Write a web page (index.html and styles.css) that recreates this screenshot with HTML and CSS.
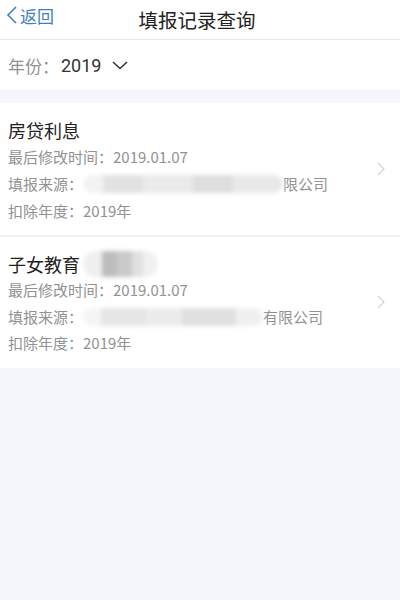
FILE: index.html
```html
<!DOCTYPE html>
<html lang="zh-CN">
  <head>
    <meta charset="UTF-8" />
    <meta name="viewport" content="width=device-width, initial-scale=1.0" />
    <title>填报记录查询</title>
    <link rel="stylesheet" href="styles.css">
  </head>
  <body>
    <header class="topbar">
      <a class="back">
        <svg width="14" height="20" viewBox="0 0 14 20"><path d="M11 2 L3 10 L11 18" fill="none" stroke="#3f7fc6" stroke-width="1.6"/></svg>
        返回
      </a>
      <h1>填报记录查询</h1>
    </header>

    <div class="year">
      <span class="label">年份：</span><span class="val">2019</span>
      <svg class="down" width="18" height="12" viewBox="0 0 18 12"><path d="M2 3 L9 9.5 L16 3" fill="none" stroke="#333" stroke-width="1.5"/></svg>
    </div>

    <section class="list">
      <article class="card">
        <h2>房贷利息</h2>
        <p>最后修改时间：2019.01.07</p>
        <p>填报来源：<span class="blur b1"></span>限公司</p>
        <p>扣除年度：2019年</p>
        <svg class="arrow" width="10" height="16" viewBox="0 0 10 16"><path d="M2 2 L8 8 L2 14" fill="none" stroke="#d2d2d2" stroke-width="1.2"/></svg>
      </article>
      <article class="card">
        <h2>子女教育<span class="blur b3"></span></h2>
        <p>最后修改时间：2019.01.07</p>
        <p>填报来源：<span class="blur b2"></span>有限公司</p>
        <p>扣除年度：2019年</p>
        <svg class="arrow" width="10" height="16" viewBox="0 0 10 16"><path d="M2 2 L8 8 L2 14" fill="none" stroke="#d2d2d2" stroke-width="1.2"/></svg>
      </article>
    </section>
  </body>
</html>
```

FILE: styles.css
```css
body {
  margin: 0;
  width: 400px;
  height: 600px;
  background: #f4f6fb;
  font-family: "Noto Sans CJK SC", "Noto Sans", sans-serif;
  overflow: hidden;
}

.topbar {
  height: 39px;
  background: white;
  border-bottom: 1px solid #e6e6e6;
  display: flex;
  align-items: center;
  justify-content: center;
  position: relative;
}

.topbar h1 {
  margin: 0;
  font-size: 19.5px;
  font-weight: normal;
  color: #222;
  margin-left: -6px;
}

.back {
  position: absolute;
  left: 5px;
  top: 0;
  height: 30px;
  display: flex;
  align-items: center;
  gap: 1px;
  color: #3f7fc6;
  font-size: 17px;
}

.year {
  height: 50px;
  background: white;
  display: flex;
  align-items: center;
  padding-left: 8px;
  font-size: 17px;
}

.year .label {
  color: #909090;
}

.year .val {
  color: #333;
  font-family: "Roboto", sans-serif;
  font-size: 18px;
  margin-left: 2px;
}

.year .down {
  margin-left: 10px;
}

.list {
  margin-top: 13px;
  display: flex;
  flex-direction: column;
  gap: 2px;
  background: #eef0f4;
}

.card {
  background: white;
  padding: 14px 8px 11px;
  position: relative;
}

.card h2 {
  margin: 0;
  font-size: 18px;
  font-weight: normal;
  color: #222;
  line-height: 26px;
  display: flex;
  align-items: center;
}

.card p {
  margin: 0;
  font-size: 15px;
  line-height: 27px;
  color: #929292;
  display: flex;
  align-items: center;
}

.card:last-child p {
  line-height: 26.5px;
}

.arrow {
  position: absolute;
  right: 14px;
  top: 50%;
  margin-top: -8px;
}

.blur {
  display: inline-block;
  height: 18px;
  filter: blur(2px);
  border-radius: 9px;
}

.b1 {
  width: 200px;
  background: linear-gradient(90deg, #f3f3f3 0 10%, #e2e2e2 10% 30%, #eaeaea 30% 55%, #dedede 55% 75%, #e9e9e9 75% 100%);
}

.b2 {
  width: 180px;
  background: linear-gradient(90deg, #f5f5f5 0 10%, #e6e6e6 10% 35%, #ececec 35% 55%, #e0e0e0 55% 85%, #f0f0f0 85% 100%);
}

.b3 {
  width: 75px;
  height: 26px;
  border-radius: 13px;
  margin-left: 3px;
  background: linear-gradient(90deg, #efefef 0 25%, #bdbdbd 25% 45%, #cacaca 45% 65%, #e0e0e0 65% 80%, #f0f0f0 80% 100%);
}
```
